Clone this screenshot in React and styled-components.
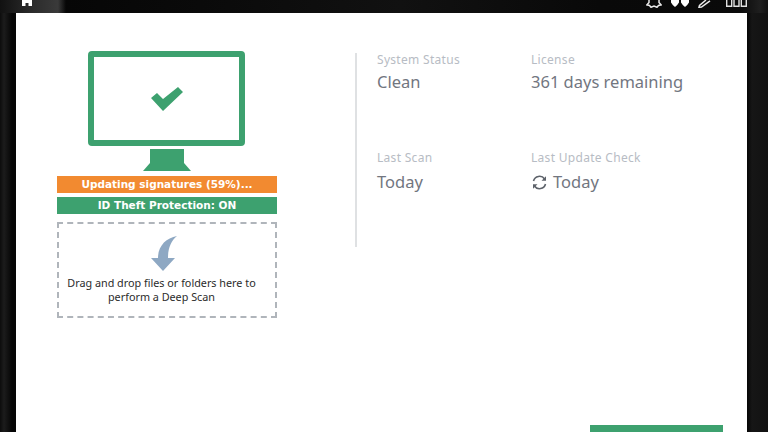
import React from "react";
import styled, { createGlobalStyle } from "styled-components";

const Global = createGlobalStyle`
  html, body { margin: 0; padding: 0; background: #000; }
  body { font-family: "Noto Sans", "Open Sans", sans-serif; }
`;

const Shell = styled.div`
  width: 768px;
  height: 432px;
  overflow: hidden;
  display: flex;
  flex-direction: column;
  background: linear-gradient(90deg, #0c0c0c 0, #1c1c1c 4px, #050505 12px, #050505 16px, #050505 747px, #161616 752px, #111 768px);
`;

const TopBar = styled.header`
  height: 13px;
  flex: none;
  display: flex;
  justify-content: space-between;
  align-items: flex-start;
  padding: 0 21px 0 20px;
  background: linear-gradient(90deg, #111 0, #2a2a2a 30px, #3a3a3a 58px, #060606 66px, #0a0a0a 200px, #111 400px, #090909 600px, #0a0a0a 740px, #1f1f1f 760px, #111 768px);
`;

const Tray = styled.div`
  display: flex;
  align-items: flex-start;
  gap: 9px;
`;

const TrayEnd = styled.span`
  display: block;
  margin-left: 5px;
  line-height: 0;
`;

const Panel = styled.main`
  flex: none;
  height: 419px;
  margin-left: 16px;
  width: 731px;
  background: #fff;
  display: flex;
  flex-direction: column;
`;

const Columns = styled.div`
  flex: none;
  height: 412px;
  display: flex;
  align-items: flex-start;
  padding: 38px 0 0 41px;
  box-sizing: border-box;
`;

const Left = styled.section`
  width: 220px;
  flex: none;
  display: flex;
  flex-direction: column;
  align-items: center;
`;

const Monitor = styled.svg`
  display: block;
  margin-bottom: 4px;
`;

const Bar = styled.div`
  width: 100%;
  height: 17px;
  margin-bottom: 4px;
  background: ${(p) => p.$color};
  color: #fff;
  font-family: "DejaVu Sans", sans-serif;
  font-weight: 700;
  font-size: 10.5px;
  line-height: 17px;
  text-align: center;
  white-space: nowrap;
`;

const Drop = styled.div`
  width: 100%;
  height: 96px;
  margin-top: 4px;
  box-sizing: border-box;
  border: 2px dashed #b0b5bb;
  display: flex;
  flex-direction: column;
  align-items: center;
  padding-top: 12px;
`;

const DropArrow = styled.svg`
  display: block;
  margin-right: 6px;
`;

const DropText = styled.p`
  margin: 4px 11px 0 0;
  font-size: 10.8px;
  line-height: 14px;
  color: #2b2b2b;
  text-align: center;
  white-space: nowrap;
`;

const Divider = styled.div`
  flex: none;
  width: 2px;
  height: 194px;
  margin: 2px 0 0 78px;
  background: #dfe1e3;
`;

const Info = styled.section`
  display: grid;
  grid-template-columns: 154px 200px;
  grid-auto-rows: 98px;
  padding: 2px 0 0 20px;
`;

const Cell = styled.div`
  display: flex;
  flex-direction: column;
  gap: ${(p) => p.$gap}px;
`;

const Label = styled.div`
  font-size: 12px;
  letter-spacing: 0.3px;
  line-height: 14px;
  color: #b7bcc4;
  white-space: nowrap;
`;

const Value = styled.div`
  display: flex;
  align-items: center;
  gap: 5px;
  font-size: 16.5px;
  line-height: 24px;
  color: #72767f;
  white-space: nowrap;
`;

const Action = styled.button`
  flex: none;
  align-self: flex-end;
  width: 133px;
  height: 30px;
  margin-right: 24px;
  border: 0;
  background: #3da16f;
`;

const Home = () => (
  <svg width="14" height="6" viewBox="0 0 14 6" style={{ display: "block" }}>
    <path d="M2 0h10v6H8.500V3h-3v3H2z" fill="#fff" />
  </svg>
);

const Gear = () => (
  <svg width="16" height="8" viewBox="0 0 16 8" fill="none" stroke="#e8e8e8" strokeWidth="1.5">
    <path d="M3 0v2.500L.8 5 3.500 5.500 5 7.300l3-1.200 3 1.200L12.500 5.500 15.200 5 13 2.500V0" />
  </svg>
);

const Hearts = () => (
  <svg width="18" height="7" viewBox="0 0 18 7" fill="#fff">
    <path d="M0 0h8v2.500Q7 4.500 4 7 1 4.500 0 2.500zM10 0h8v2.500Q17 4.500 14 7 11 4.500 10 2.500z" />
  </svg>
);

const Pencil = () => (
  <svg width="14" height="8" viewBox="0 0 14 8" fill="none" stroke="#e8e8e8" strokeWidth="1.5">
    <path d="M8 0L1.500 5.500 1 7.300 3.500 7 12 .8" />
  </svg>
);

const Grid = () => (
  <svg width="21" height="7" viewBox="0 0 21 7" fill="none" stroke="#e0e0e0" strokeWidth="1.4">
    <path d="M.7 0v6.300h5V0M8 0v6.300h5V0M15.300 0v6.300h5V0" />
  </svg>
);

const Sync = () => (
  <svg width="17" height="17" viewBox="0 0 17 17" fill="none" stroke="#5d626a" strokeWidth="1.6">
    <path d="M2.500 7A6.200 6.200 0 0 1 13.600 5" />
    <path d="M14.500 10A6.200 6.200 0 0 1 3.400 12" />
    <path d="M15 2.300v4.500h-4.500z" fill="#5d626a" stroke="none" />
    <path d="M2 14.700v-4.500h4.500z" fill="#5d626a" stroke="none" />
  </svg>
);

const stats = [
  { label: "System Status", value: "Clean", gap: 3 },
  { label: "License", value: "361 days remaining", gap: 3 },
  { label: "Last Scan", value: "Today", gap: 5 },
  { label: "Last Update Check", value: "Today", gap: 5, icon: true },
];

export default function App() {
  return (
    <Shell>
      <Global />
      <TopBar>
        <Home />
        <Tray>
          <Gear />
          <Hearts />
          <Pencil />
          <TrayEnd>
            <Grid />
          </TrayEnd>
        </Tray>
      </TopBar>
      <Panel>
        <Columns>
          <Left>
            <Monitor width="158" height="121" viewBox="0 0 158 121">
              <rect x="3" y="3" width="151" height="89" rx="1" fill="none" stroke="#3da16f" strokeWidth="6" />
              <path d="M63 47l6-5 6 6 15-12 5 5-20 19z" fill="#3da16f" />
              <path d="M62 98h34v14l7 8H55l7-8z" fill="#3da16f" />
            </Monitor>
            <Bar $color="#f28a30">Updating signatures (59%)...</Bar>
            <Bar $color="#3da16f">ID Theft Protection: ON</Bar>
            <Drop>
              <DropArrow width="28" height="36" viewBox="0 0 28 36">
                <path d="M27 0C16 2 8 10 8 22H1L13 35 25 22H18C18 12 21 5 27 0z" fill="#8ea8c3" />
              </DropArrow>
              <DropText>
                Drag and drop files or folders here to
                <br />
                perform a Deep Scan
              </DropText>
            </Drop>
          </Left>
          <Divider />
          <Info>
            {stats.map((s) => (
              <Cell key={s.label} $gap={s.gap}>
                <Label>{s.label}</Label>
                <Value>
                  {s.icon && <Sync />}
                  {s.value}
                </Value>
              </Cell>
            ))}
          </Info>
        </Columns>
        <Action aria-label="Scan" />
      </Panel>
    </Shell>
  );
}
